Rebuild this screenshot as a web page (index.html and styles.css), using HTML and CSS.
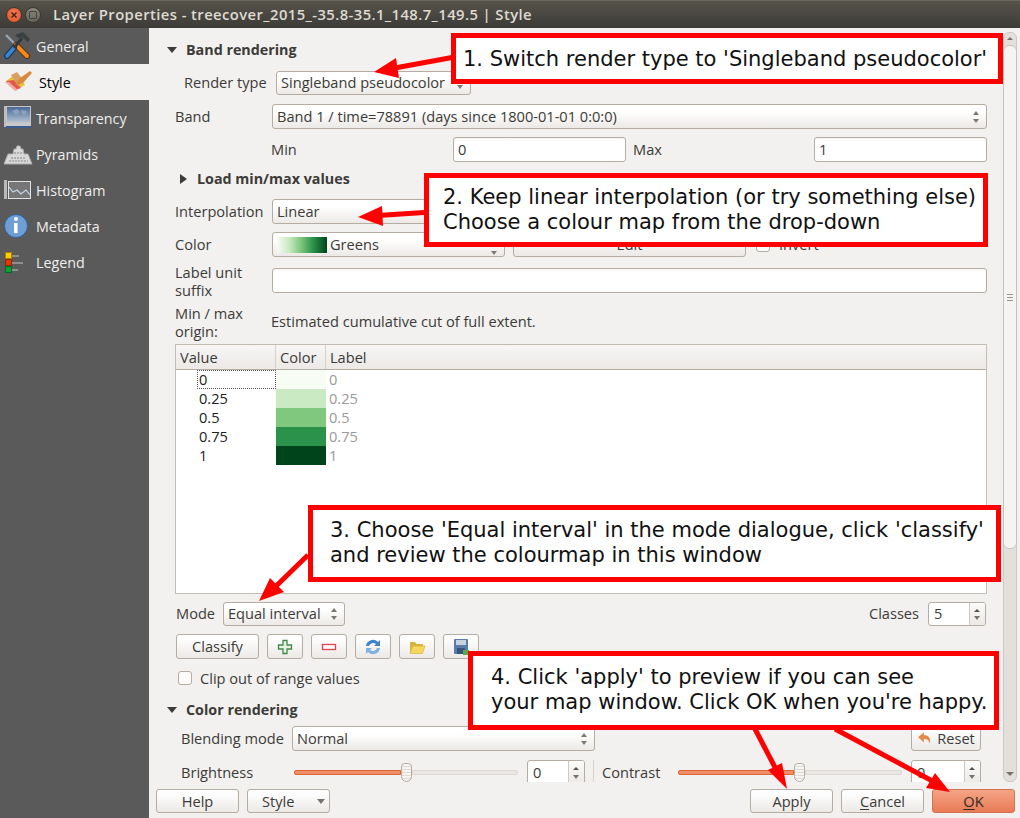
FILE: index.html
```html
<!DOCTYPE html>
<html lang="en">
<head>
<meta charset="utf-8">
<title>Layer Properties</title>
<link rel="stylesheet" href="styles.css">
</head>
<body>
<div class="window">
  <header class="titlebar">
    <span class="wbtn close"><svg width="10" height="10" viewBox="0 0 10 10"><path d="M2.500 2.500l5 5M7.500 2.500l-5 5" stroke="#4a2015" stroke-width="1.500"/></svg></span>
    <span class="wbtn max"><span class="maxbox"></span></span>
    <span class="wtitle">Layer Properties - treecover_2015_-35.8-35.1_148.7_149.5 | Style</span>
  </header>
  <div class="body">
    <nav class="sidebar">
      <div class="navitem">
        <svg class="navicon" viewBox="0 0 30 30"><path d="M3 4l11 11" stroke="#9aa3ad" stroke-width="2.400"/><path d="M13 14l11 11" stroke="#5c2a08" stroke-width="6" stroke-linecap="round"/><path d="M13 14l11 11" stroke="#f08a1d" stroke-width="4" stroke-linecap="round"/><path d="M4 25l7-8" stroke="#123a66" stroke-width="6" stroke-linecap="round"/><path d="M4 25l7-8" stroke="#3d86cc" stroke-width="3.600" stroke-linecap="round"/><path d="M11 17l8-10" stroke="#33383c" stroke-width="3"/><path d="M12 4l8-3 7 7-2 3-6-5-4 1z" fill="#3a3f42"/></svg>
        <span>General</span>
      </div>
      <div class="navitem active">
        <svg class="navicon" viewBox="0 0 30 30"><path d="M3 14l11-8 8 12-10 5z" fill="#e8c23d"/><path d="M3 14l8-1 7 8-6 2z" fill="#e2584a"/><path d="M8 8l6-3 7 9-6 5z" fill="#d9a066"/><path d="M12 18l5-7 10-7 2 2-9 10z" fill="#d98a3c"/><path d="M2 15l10 9 3-1-9-8z" fill="#f1a9a0"/></svg>
        <span>Style</span>
      </div>
      <div class="navitem">
        <svg class="navicon" viewBox="0 0 30 30"><defs><linearGradient id="mapg" x1="0" y1="0" x2="0" y2="1"><stop offset="0" stop-color="#456794"/><stop offset="1" stop-color="#b4c2d2"/></linearGradient></defs><rect x="3.500" y="3.500" width="24" height="16" fill="url(#mapg)" stroke="#c4c4c4"/><path d="M9 8l5-2 3 3-4 3zM18 7l6 1-2 4-3-1z" fill="#8ba2be"/><rect x="1" y="3" width="2" height="21" fill="#bdbdbd"/><rect x="3" y="20" width="25" height="3" fill="#c9c9c9"/><rect x="3" y="23" width="25" height="2" fill="#3a5d8f"/></svg>
        <span>Transparency</span>
      </div>
      <div class="navitem">
        <svg class="navicon" viewBox="0 0 30 30"><path d="M1 25l4-10h5l1-5h2l1-3h3l1 3h2l1 5h4l4 10z" fill="#d9d9d9" stroke="#ababab"/><path d="M8 19h14M11 14h9M6 22h19" stroke="#858585" stroke-dasharray="2 1"/></svg>
        <span>Pyramids</span>
      </div>
      <div class="navitem">
        <svg class="navicon" viewBox="0 0 30 30"><rect x="5.500" y="6.500" width="22" height="17" fill="#767676" stroke="#e2e2e2"/><rect x="1" y="5" width="3" height="19" fill="#b9b9b9"/><path d="M6 12l4 5 4-2 4 4 5-4 4 5" fill="none" stroke="#c7d6e8" stroke-width="1.200"/></svg>
        <span>Histogram</span>
      </div>
      <div class="navitem">
        <svg class="navicon" viewBox="0 0 30 30"><circle cx="13" cy="15" r="11.500" fill="#6f9fd4" stroke="#2f5f99"/><circle cx="13" cy="8" r="2" fill="#fff"/><path d="M11 12h3.600v10h-3.600z" fill="#fff"/></svg>
        <span>Metadata</span>
      </div>
      <div class="navitem">
        <svg class="navicon" viewBox="0 0 30 30"><rect x="2.500" y="5.500" width="6" height="6" fill="#fc0" stroke="#a87f00"/><rect x="2.500" y="12.500" width="6" height="6" fill="#e03a00" stroke="#902600"/><rect x="2.500" y="19.500" width="6" height="6" fill="#0a9e3a" stroke="#066a26"/><path d="M9 9h7M9 16h11M9 23h6" stroke="#a0a0a0" stroke-width="1.600"/></svg>
        <span>Legend</span>
      </div>
    </nav>
    <main class="main">
      <div class="upper">
        <div class="content">
          <div class="row h20 mt12 head">
            <span class="tri-down"></span><span class="headtext">Band rendering</span>
          </div>
          <div class="row h24 mt11 in-render">
            <label class="lab w92">Render type</label>
            <div class="combo w195"><span>Singleband pseudocolor</span><i class="updown"></i></div>
          </div>
          <div class="row mt9 in-form">
            <label class="lab w97">Band</label>
            <div class="combo grow"><span>Band 1 / time=78891 (days since 1800-01-01 0:0:0)</span><i class="updown"></i></div>
          </div>
          <div class="row mt8 in-min">
            <label class="lab w182">Min</label>
            <div class="field w173">0</div>
            <label class="lab w188 indent7">Max</label>
            <div class="field w173">1</div>
          </div>
          <div class="row h20 mt7 in-load">
            <span class="tri-right"></span><span class="headtext">Load min/max values</span>
          </div>
          <div class="row mt10 in-form">
            <label class="lab w97">Interpolation</label>
            <div class="combo grow"><span>Linear</span><i class="updown"></i></div>
          </div>
          <div class="row mt8 in-form">
            <label class="lab w97">Color</label>
            <div class="combo w233 ramp"><b class="rampbar"></b><span>Greens</span><i class="down"></i></div>
            <div class="btn w233 ml8">Edit</div>
            <span class="check ml10"></span><span class="lab ml9">Invert</span>
          </div>
          <div class="row mt11 in-form">
            <label class="lab w97 two">Label unit<br>suffix</label>
            <div class="field grow"></div>
          </div>
          <div class="row h31 mt13 in-form">
            <label class="lab w96 two">Min / max<br>origin:</label>
            <span class="lab">Estimated cumulative cut of full extent.</span>
          </div>
          <div class="table">
            <div class="thead"><span class="th">Value</span><span class="th">Color</span><span class="th last">Label</span></div>
            <div class="tr"><span class="val focus">0</span><span class="sw s1"></span><span class="lbl">0</span></div>
            <div class="tr"><span class="val">0.25</span><span class="sw s2"></span><span class="lbl">0.25</span></div>
            <div class="tr"><span class="val">0.5</span><span class="sw s3"></span><span class="lbl">0.5</span></div>
            <div class="tr"><span class="val">0.75</span><span class="sw s4"></span><span class="lbl">0.75</span></div>
            <div class="tr"><span class="val">1</span><span class="sw s5"></span><span class="lbl">1</span></div>
          </div>
          <div class="row h24 mt8 in-mode">
            <label class="lab w47">Mode</label>
            <div class="combo w122"><span>Equal interval</span><i class="updown"></i></div>
            <span class="spacer"></span>
            <label class="lab">Classes</label>
            <div class="spin w58 ml9"><span class="spinval">5</span><span class="spinbtns"><i class="up"></i><i class="down2"></i></span></div>
          </div>
          <div class="row mt8 in-mode">
            <div class="btn w83">Classify</div>
            <div class="btn icon ml8"><svg width="20" height="20" viewBox="0 0 20 20"><path d="M8 3.500h4v4.500h4.500v4h-4.500v4.500h-4v-4.500h-4.500v-4h4.500z" fill="#e8f3e4" stroke="#3f8a4a" stroke-width="1.300"/></svg></div>
            <div class="btn icon ml8"><svg width="20" height="20" viewBox="0 0 20 20"><rect x="3.500" y="7.500" width="13" height="5" fill="#fff" stroke="#e8414a" stroke-width="1.300"/></svg></div>
            <div class="btn icon ml8"><svg width="20" height="20" viewBox="0 0 20 20"><path d="M3 9a7 7 0 0 1 12-4l2-2v6h-6l2-2a4.500 4.500 0 0 0-7 2z" fill="#3f83cc"/><path d="M17 11a7 7 0 0 1-12 4l-2 2v-6h6l-2 2a4.500 4.500 0 0 0 7-2z" fill="#7fb1e3"/></svg></div>
            <div class="btn icon ml8"><svg width="20" height="20" viewBox="0 0 20 20"><path d="M3 16V5h5l1.500 2H16v2H6z" fill="#d7b53a"/><path d="M6 9h12l-2.500 7.500H3z" fill="#f5d760" stroke="#cfae36" stroke-width=".6"/></svg></div>
            <div class="btn icon ml8"><svg width="20" height="20" viewBox="0 0 20 20"><rect x="3" y="2" width="14" height="15" rx="1" fill="#5a7da8"/><rect x="5" y="3" width="10" height="5" fill="#c9d3df"/><rect x="6" y="11" width="8" height="6" fill="#39557a"/><rect x="12" y="13" width="6" height="5" fill="#5aa84e"/></svg></div>
          </div>
          <div class="row h20 mt9 in-clip">
            <span class="check"></span><span class="lab ml8">Clip out of range values</span>
          </div>
          <div class="row h20 mt12 head">
            <span class="tri-down"></span><span class="headtext">Color rendering</span>
          </div>
          <div class="row mt6 in-blend">
            <label class="lab w111">Blending mode</label>
            <div class="combo w303"><span>Normal</span><i class="updown"></i></div>
            <span class="spacer"></span>
            <div class="btn w70 reset"><svg width="16" height="16" viewBox="0 0 14 14"><path d="M6 1L1 5.500 6 10V7c3 0 4.500 1 5 4 1.500-4-.5-7.500-5-7.500z" fill="#e58a4e"/></svg>Reset</div>
          </div>
          <div class="row mt9 in-blend">
            <label class="lab w113">Brightness</label>
            <div class="slider"><span class="fill"></span><span class="handle"></span><span class="rest"></span></div>
            <div class="spin w58 ml9"><span class="spinval">0</span><span class="spinbtns"><i class="up"></i><i class="down2"></i></span></div>
            <span class="sep"></span>
            <label class="lab w76">Contrast</label>
            <div class="slider"><span class="fill long"></span><span class="handle"></span><span class="rest"></span></div>
            <div class="spin w70 ml9"><span class="spinval">0</span><span class="spinbtns"><i class="up"></i><i class="down2"></i></span></div>
          </div>
        </div>
        <div class="scrollbar">
          <span class="sb-up"></span>
          <span class="sb-thumb"><i class="grip"></i></span>
          <span class="spacer"></span>
          <span class="sb-down"></span>
        </div>
      </div>
      <footer class="buttons">
        <div class="btn w83">Help</div>
        <div class="btn w83 ml8 stylebtn">Style<i class="menu-arrow"></i></div>
        <span class="spacer"></span>
        <div class="btn w83">Apply</div>
        <div class="btn w83 ml8"><span><u>C</u>ancel</span></div>
        <div class="btn w83 ml8 ok"><span><u>O</u>K</span></div>
      </footer>
    </main>
  </div>
  <div class="callout c1"><p>1. Switch render type to 'Singleband pseudocolor'</p></div>
  <div class="callout c2"><p>2. Keep linear interpolation (or try something else)</p><p>Choose a colour map from the drop-down</p></div>
  <div class="callout c3"><p>3. Choose 'Equal interval' in the mode dialogue, click 'classify'</p><p>and review the colourmap in this window</p></div>
  <div class="callout c4"><p>4. Click 'apply' to preview if you can see</p><p>your map window. Click OK when you're happy.</p></div>
  <svg class="arrows" width="1020" height="818" viewBox="0 0 1020 818">
    <g fill="none" stroke="#f00" stroke-width="5">
      <path d="M452 57.500L392 68.500"/>
      <path d="M424 212.500L378 215.500"/>
      <path d="M308 555L272 590"/>
      <path d="M755 729L779 775"/>
      <path d="M835 729L938 784"/>
    </g>
    <g fill="#f00">
      <path d="M374 72L396 58 399 78z"/>
      <path d="M358 217L382 206 383 226z"/>
      <path d="M259 601L270 578 284 592z"/>
      <path d="M787 789L782 763 768 770z"/>
      <path d="M950 792L935 773 926 788z"/>
    </g>
  </svg>
</div>
</body>
</html>
```

FILE: styles.css
```css
* { box-sizing: border-box; }
html, body { margin: 0; padding: 0; }
body { width: 1020px; height: 818px; overflow: hidden; background: #f2f1f0; }
.window {
  position: relative;
  width: 1020px;
  height: 818px;
  display: flex;
  flex-direction: column;
  font: 14.6px/17px "Open Sans", "Noto Sans", sans-serif;
  color: #3c3b37;
}
.titlebar {
  height: 28px;
  flex: none;
  display: flex;
  align-items: center;
  padding-left: 6px;
  background: linear-gradient(#56534a, #3c3b37);
  border-top: 1px solid #6a675c;
}
.wbtn {
  width: 16px; height: 16px; border-radius: 50%;
  display: flex; align-items: center; justify-content: center;
}
.close { background: radial-gradient(circle at 50% 40%, #f4805a, #dd4a20); border: 1px solid #40382c; }
.max { margin-left: 3px; background: linear-gradient(#8a887e, #66645b); border: 1px solid #3a382f; }
.maxbox { width: 8px; height: 8px; border: 1.500px solid #45433b; border-radius: 1px; }
.wtitle { margin-left: 12px; font-weight: 600; font-size: 14.8px; color: #dfdbd2; white-space: nowrap; letter-spacing: .42px; }

.body { flex: 1; display: flex; min-height: 0; }
.sidebar { width: 149px; flex: none; background: #5a5a5a; color: #eeeeec; }
.navitem { height: 36px; display: flex; align-items: center; padding-left: 3px; gap: 3px; font-size: 14.3px; }
.navitem.active { background: #f2f1f0; color: #000; gap: 6px; }
.navicon { width: 30px; height: 30px; flex: none; }

.main { flex: 1; min-width: 0; display: flex; flex-direction: column; }
.upper { height: 754px; flex: none; display: flex; }
.content { flex: 1; min-width: 0; overflow: hidden; display: flex; flex-direction: column; }
.buttons { flex: 1; display: flex; padding: 7px 5px 5px 7px; align-items: flex-start; }
.buttons .btn { padding-top: 1px; }
.spacer { flex: 1; }

.row { display: flex; align-items: center; height: 25px; flex: none; padding-right: 16px; white-space: nowrap; }
.h20 { height: 20px; line-height: 18px; } .h24 { height: 24px; } .h31 { height: 31px; }
.h24 .lab, .h24 .combo span { margin-bottom: 2px; }
.h24 .spinval { padding-top: 2px; }
.mt6 { margin-top: 6px; } .mt7 { margin-top: 7px; } .mt8 { margin-top: 8px; } .mt9 { margin-top: 9px; }
.mt10 { margin-top: 10px; } .mt11 { margin-top: 11px; } .mt12 { margin-top: 12px; } .mt13 { margin-top: 13px; }
.ml8 { margin-left: 8px; } .ml9 { margin-left: 9px; } .ml10 { margin-left: 10px; }
.head { padding-left: 18px; }
.in-render { padding-left: 35px; }
.in-form { padding-left: 26px; }
.in-min { padding-left: 122px; }
.in-load { padding-left: 31px; }
.in-mode { padding-left: 27px; padding-right: 17px; }
.in-clip { padding-left: 29px; }
.in-blend { padding-left: 32px; padding-right: 22px; }

.lab { flex: none; }
.two { line-height: 18px; white-space: normal; }
.indent7 { padding-left: 7px; }
.w47 { width: 47px; } .w58 { width: 58px; } .w70 { width: 70px; } .w76 { width: 76px; } .w83 { width: 83px; }
.w92 { width: 92px; } .w96 { width: 96px; } .w97 { width: 97px; } .w111 { width: 111px; } .w113 { width: 113px; }
.w122 { width: 122px; } .w173 { width: 173px; } .w182 { width: 182px; } .w188 { width: 188px; } .w195 { width: 195px; }
.w233 { width: 233px; } .w303 { width: 303px; }
.grow { flex: 1; min-width: 0; }

.headtext { font-weight: 700; font-size: 14.3px; margin-left: 8px; }
.head .headtext { margin-left: 9px; }
.tri-down { width: 0; height: 0; border-left: 5.500px solid transparent; border-right: 5.500px solid transparent; border-top: 6px solid #3c3b37; }
.tri-right { width: 0; height: 0; border-top: 5.500px solid transparent; border-bottom: 5.500px solid transparent; border-left: 7px solid #3c3b37; margin-right: 2px; }

.combo, .btn, .spin, .field { border: 1px solid #b5aca2; border-radius: 3px; height: 100%; flex: none; }
.combo {
  position: relative;
  display: flex; align-items: center; padding-left: 4px;
  background: linear-gradient(#ffffff 30%, #ece9e6);
}
.combo.grow { flex: 1; }
.updown, .down { position: absolute; right: 6px; top: 50%; width: 7px; }
.updown::before, .updown::after, .down::after {
  content: ""; position: absolute; left: 0; width: 0; height: 0;
  border-left: 3.500px solid transparent; border-right: 3.500px solid transparent;
}
.updown::before { top: -6px; border-bottom: 4px solid #7d7972; }
.updown::after { top: 2px; border-top: 4px solid #7d7972; }
.down::after { top: 6px; border-top: 4px solid #7d7972; }
.rampbar { width: 50px; height: 16px; margin-right: 3px; background: linear-gradient(90deg, #f7fcf5, #c7e9c0 25%, #74c476 50%, #238b45 75%, #00441b); }
.field { background: linear-gradient(#f7f6f5, #fff 4px); padding: 2px 4px; display: flex; align-items: center; }
.field.grow { flex: 1; }
.btn {
  display: flex; align-items: center; justify-content: center;
  background: linear-gradient(#fdfdfd 20%, #ece9e6);
}
.btn.icon { width: 36px; }
.check { width: 14px; height: 14px; flex: none; border: 1px solid #b5aca2; border-radius: 3px; background: #fbfbfa; }
.reset { gap: 4px; }
.stylebtn { position: relative; justify-content: flex-start; padding-left: 14px; }
.menu-arrow {
  position: absolute; right: 4px; top: 9px; width: 0; height: 0;
  border-left: 4px solid transparent; border-right: 4px solid transparent; border-top: 5px solid #77736d;
}
.ok { background: linear-gradient(#f5a587, #ea7a55); border-color: #cf7450; color: #2c2a26; }
u { text-underline-offset: 2px; }

.table { margin: 7px 0 0 26px; width: 812px; height: 250px; flex: none; background: #fff; border: 1px solid #c3bcb4; }
.thead { display: grid; grid-template-columns: 100px 50px 1fr; height: 25px; background: linear-gradient(#f7f6f5, #ece9e6); border-bottom: 1px solid #b5aca2; }
.th { padding: 4px 4px 0; border-right: 1px solid #d5d0ca; }
.th.last { border-right: 0; }
.tr { display: grid; grid-template-columns: 100px 50px 1fr; height: 19px; line-height: 19px; color: #222; }
.val { margin-left: 21px; padding-left: 2px; }
.focus { border: 1px dotted #555; padding-left: 1px; line-height: 17px; }
.sw { display: block; }
.s1 { background: #f7fcf5; } .s2 { background: #c9eac3; } .s3 { background: #7fc87d; } .s4 { background: #2a924a; } .s5 { background: #00441b; }
.lbl { padding-left: 3px; color: #9a9a9a; }

.spin { display: flex; background: #fff; overflow: hidden; }
.spinval { flex: 1; padding: 3px 5px; }
.spinbtns { width: 16px; position: relative; border-left: 1px solid #cfc9c3; background: linear-gradient(#fbfbfa, #ece9e6); }
.up, .down2 { position: absolute; left: 4px; width: 0; height: 0; border-left: 3.500px solid transparent; border-right: 3.500px solid transparent; }
.up { top: 6px; border-bottom: 3px solid #55524d; }
.down2 { bottom: 5px; border-top: 4px solid #77736d; }

.slider { width: 224px; flex: none; display: flex; align-items: center; height: 19px; }
.fill { width: 107px; height: 5px; border-radius: 2px 0 0 2px; background: #f08e68; border: 1px solid #df6433; }
.fill.long { width: 116px; }
.handle { width: 11px; height: 19px; flex: none; border: 1px solid #b5aca2; border-radius: 4px 4px 6px 6px; background: repeating-linear-gradient(#f6f5f4 0, #f6f5f4 2px, #dedad5 2px, #dedad5 3px); }
.rest { flex: 1; height: 5px; background: #e9e6e3; border: 1px solid #dcd8d3; border-radius: 0 2px 2px 0; }
.sep { width: 1px; height: 25px; background: #d5d0ca; margin: 0 8px 0 8px; flex: none; }

.scrollbar { width: 14px; flex: none; margin: 4px 3px 0 0; display: flex; flex-direction: column; background: #e3e0dc; border: 1px solid #cfc9c3; border-radius: 6px; }
.sb-up, .sb-down { height: 12px; flex: none; position: relative; }
.sb-up::after { content: ""; position: absolute; left: 3px; top: 4px; border-left: 3px solid transparent; border-right: 3px solid transparent; border-bottom: 3px solid #77736d; }
.sb-down::after { content: ""; position: absolute; left: 2px; top: 3px; border-left: 4px solid transparent; border-right: 4px solid transparent; border-top: 4px solid #77736d; }
.sb-thumb { height: 504px; flex: none; background: #f5f4f2; border: 1px solid #c9c3bd; border-radius: 6px; margin: 0 -1px; display: flex; align-items: center; justify-content: center; }
.grip { width: 6px; height: 7px; background: repeating-linear-gradient(#9a958f 0, #9a958f 1px, transparent 1px, transparent 3px); }

.callout {
  position: absolute;
  background: #fff;
  border: 5px solid #f00;
  font: 21px/25px "DejaVu Sans", sans-serif;
  color: #111;
  white-space: nowrap;
}
.callout p { margin: 0; }
.c1 { left: 451px; top: 33px; width: 552px; height: 51px; padding: 9px 0 0 7px; }
.c2 { left: 424px; top: 173px; width: 564px; height: 74px; padding: 7px 0 0 14px; }
.c3 { left: 308px; top: 505px; width: 693px; height: 77px; padding: 8px 0 0 17px; }
.c4 { left: 468px; top: 651px; width: 531px; height: 79px; padding: 9px 0 0 18px; }
.arrows { position: absolute; left: 0; top: 0; pointer-events: none; }
```
